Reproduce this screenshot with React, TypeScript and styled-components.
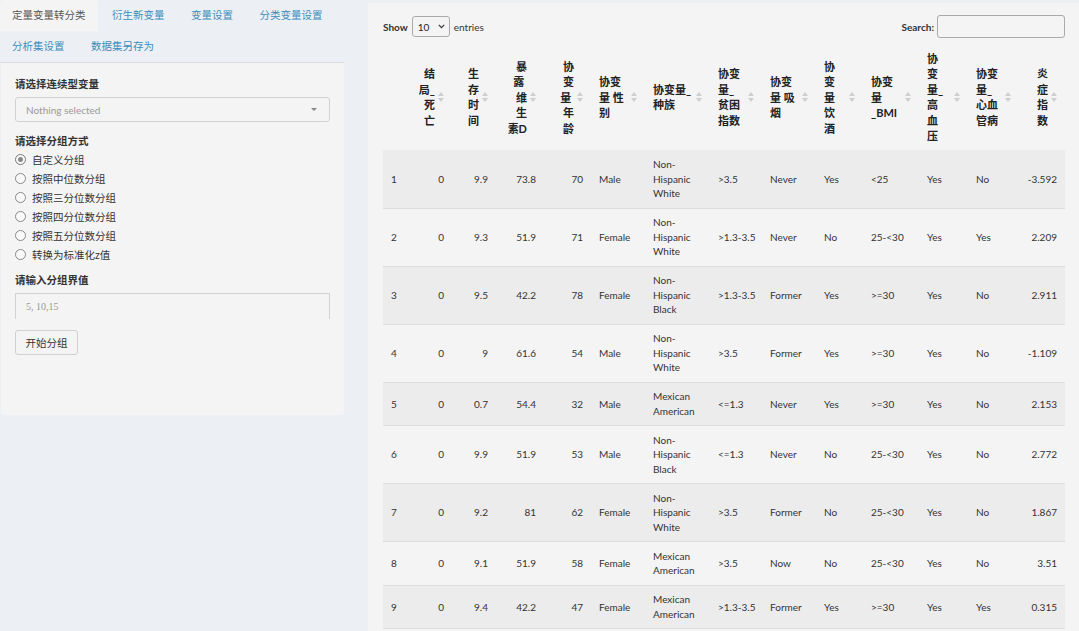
import React from 'react';
import styled, { createGlobalStyle } from 'styled-components';

const GlobalStyle = createGlobalStyle`
  html, body {
    margin: 0;
    padding: 0;
    background: #ecf0f5;
    font-family: Lato, "Noto Sans CJK SC", sans-serif;
    color: #333;
  }
`;

const Page = styled.div`
  display: flex;
  align-items: flex-start;
  height: 631px;
  overflow: hidden;
`;

const Sidebar = styled.div`
  width: 344px;
  flex: none;
`;

const TabList = styled.ul`
  display: flex;
  flex-wrap: wrap;
  list-style: none;
  margin: 0;
  padding: 0;
  border-bottom: 1px solid #dcdcdc;
`;

const Tab = styled.li<{ $active?: boolean }>`
  height: 31px;
  line-height: 31px;
  padding: 0 12px;
  margin-right: 2.5px;
  font-size: 10.5px;
  color: ${(p) => (p.$active ? '#555' : '#3c8dbc')};
  background: ${(p) => (p.$active ? '#f4f4f4' : 'transparent')};
  border-radius: 4px 4px 0 0;
`;

const Well = styled.div`
  margin-left: 1px;
  height: 352px;
  box-sizing: border-box;
  padding: 14px 14px;
  background: #f4f4f4;
  border-radius: 0 0 4px 4px;
`;

const FieldLabel = styled.div<{ $gap?: number }>`
  font-size: 10.5px;
  font-weight: 700;
  line-height: 15px;
  color: #333;
  margin-top: ${(p) => p.$gap ?? 0}px;
`;

const PickerBox = styled.div`
  margin-top: 5px;
  height: 25px;
  box-sizing: border-box;
  border: 1px solid #d2d2d2;
  border-radius: 3px;
  display: flex;
  align-items: center;
  justify-content: space-between;
  padding: 0 10px;
  font-size: 10px;
  color: #999;
`;

const Caret = styled.span`
  width: 0;
  height: 0;
  border-left: 3px solid transparent;
  border-right: 3px solid transparent;
  border-top: 3px solid #888;
  margin-right: 2px;
`;

const RadioGroup = styled.div`
  margin-top: 1px;
  display: flex;
  flex-direction: column;
`;

const RadioRow = styled.label`
  display: flex;
  align-items: center;
  height: 19px;
  font-size: 10.5px;
  color: #333;
`;

const RadioDot = styled.span<{ $checked?: boolean }>`
  width: 9px;
  height: 9px;
  border-radius: 50%;
  border: 1px solid ${(p) => (p.$checked ? '#777' : '#888')};
  background: #fafafa;
  margin-right: 6px;
  display: flex;
  align-items: center;
  justify-content: center;
  &::after {
    content: '';
    width: 5px;
    height: 5px;
    border-radius: 50%;
    background: ${(p) => (p.$checked ? '#888' : 'transparent')};
  }
`;

const TextBox = styled.div`
  margin-top: 5px;
  height: 26px;
  box-sizing: border-box;
  border: 1px solid #d2d2d2;
  border-bottom: none;
  padding: 0 10px;
  display: flex;
  align-items: center;
  font-family: "Liberation Serif", serif;
  font-size: 10px;
  color: #999;
`;

const PlainButton = styled.div`
  margin-top: 11px;
  width: 63px;
  height: 25px;
  box-sizing: border-box;
  border: 1px solid #d0d0d0;
  border-radius: 3px;
  display: flex;
  align-items: center;
  justify-content: center;
  font-size: 10.5px;
  color: #333;
`;

const MainPanel = styled.div`
  flex: 1;
  margin-left: 24px;
  margin-top: 3px;
  min-height: 640px;
  background: #f4f4f4;
  padding: 12px 14px 0 15px;
`;

const Controls = styled.div`
  display: flex;
  align-items: center;
  justify-content: space-between;
  height: 23px;
  font-size: 10px;
  font-weight: 700;
  color: #333;
`;

const ControlGroup = styled.div`
  display: flex;
  align-items: center;
  gap: 4px;
`;

const LengthSelect = styled.div`
  width: 38px;
  height: 21px;
  box-sizing: border-box;
  border: 1px solid #aaa;
  border-radius: 3px;
  display: flex;
  align-items: center;
  justify-content: space-between;
  padding: 0 4px 0 5px;
  font-weight: 400;
  color: #222;
`;

const PlainText = styled.span`
  font-weight: 400;
`;

const SearchInput = styled.div`
  width: 128px;
  height: 23px;
  box-sizing: border-box;
  border: 1px solid #aaa;
  border-radius: 3px;
  margin-left: -1px;
`;

const Table = styled.table`
  margin-top: 7px;
  width: 682px;
  table-layout: fixed;
  border-collapse: collapse;
  font-size: 10px;
`;

const HeadCell = styled.th<{ $right?: boolean }>`
  position: relative;
  height: 105px;
  box-sizing: border-box;
  padding: 0 17px 0 8px;
  vertical-align: middle;
  text-align: ${(p) => (p.$right ? 'right' : 'left')};
  font-size: 11px;
  font-weight: 700;
  line-height: 15.5px;
  color: #222;
  white-space: nowrap;
`;

const SortIcon = styled.svg`
  position: absolute;
  right: 8px;
  top: 50%;
  margin-top: -5px;
`;

const Row = styled.tr<{ $odd?: boolean }>`
  background: ${(p) => (p.$odd ? '#ececec' : 'transparent')};
  border-top: 1px solid #dddddd;
  &:first-child {
    border-top-color: transparent;
  }
  &:last-child {
    border-bottom: 1px solid #dddddd;
  }
`;

const Cell = styled.td<{ $right?: boolean }>`
  padding: 6.75px 8px;
  line-height: 14.5px;
  vertical-align: middle;
  text-align: ${(p) => (p.$right ? 'right' : 'left')};
  white-space: nowrap;
  color: #333;
`;

type Col = { w: number; lines: string[]; right?: boolean; sort?: boolean };

const columns: Col[] = [
  { w: 27, lines: [] },
  { w: 42, lines: ['结', '局_', '死', '亡'], right: true, sort: true },
  { w: 44, lines: ['生', '存', '时', '间'], right: true, sort: true },
  { w: 48, lines: ['暴', '露\u00a0', '维', '生', '素D'], right: true, sort: true },
  { w: 47, lines: ['协', '变', '量\u00a0', '年', '龄'], right: true, sort: true },
  { w: 54, lines: ['协变', '量 性', '别'], sort: true },
  { w: 65, lines: ['协变量_', '种族'], sort: true },
  { w: 52, lines: ['协变', '量_', '贫困', '指数'], sort: true },
  { w: 54, lines: ['协变', '量 吸', '烟'], sort: true },
  { w: 47, lines: ['协', '变', '量', '饮', '酒'], sort: true },
  { w: 56, lines: ['协变', '量', '_BMI'], sort: true },
  { w: 49, lines: ['协', '变', '量_', '高', '血', '压'], sort: true },
  { w: 51, lines: ['协变', '量_', '心血', '管病'], sort: true },
  { w: 46, lines: ['炎', '症', '指', '数'], right: true, sort: true },
];

const rows: string[][] = [
  ['1', '0', '9.9', '73.8', '70', 'Male', 'Non-|Hispanic|White', '>3.5', 'Never', 'Yes', '<25', 'Yes', 'No', '-3.592'],
  ['2', '0', '9.3', '51.9', '71', 'Female', 'Non-|Hispanic|White', '>1.3-3.5', 'Never', 'No', '25-<30', 'Yes', 'Yes', '2.209'],
  ['3', '0', '9.5', '42.2', '78', 'Female', 'Non-|Hispanic|Black', '>1.3-3.5', 'Former', 'Yes', '>=30', 'Yes', 'No', '2.911'],
  ['4', '0', '9', '61.6', '54', 'Male', 'Non-|Hispanic|White', '>3.5', 'Former', 'Yes', '>=30', 'Yes', 'No', '-1.109'],
  ['5', '0', '0.7', '54.4', '32', 'Male', 'Mexican|American', '<=1.3', 'Never', 'Yes', '>=30', 'Yes', 'No', '2.153'],
  ['6', '0', '9.9', '51.9', '53', 'Male', 'Non-|Hispanic|Black', '<=1.3', 'Never', 'No', '25-<30', 'Yes', 'No', '2.772'],
  ['7', '0', '9.2', '81', '62', 'Female', 'Non-|Hispanic|White', '>3.5', 'Former', 'No', '25-<30', 'Yes', 'No', '1.867'],
  ['8', '0', '9.1', '51.9', '58', 'Female', 'Mexican|American', '>3.5', 'Now', 'No', '25-<30', 'Yes', 'No', '3.51'],
  ['9', '0', '9.4', '42.2', '47', 'Female', 'Mexican|American', '>1.3-3.5', 'Former', 'Yes', '>=30', 'Yes', 'Yes', '0.315'],
];

const radios = ['自定义分组', '按照中位数分组', '按照三分位数分组', '按照四分位数分组', '按照五分位数分组', '转换为标准化z值'];

const Sort = () => (
  <SortIcon width="6" height="10" viewBox="0 0 6 10">
    <path d="M3 0 L6 4 L0 4 Z" fill="#cfcfcf" />
    <path d="M3 10 L6 6 L0 6 Z" fill="#cfcfcf" />
  </SortIcon>
);

const Lines = ({ text }: { text: string }) => (
  <>
    {text.split('|').map((t, i) => (
      <React.Fragment key={i}>
        {i > 0 && <br />}
        {t}
      </React.Fragment>
    ))}
  </>
);

export default function App() {
  return (
    <Page>
      <GlobalStyle />
      <Sidebar>
        <TabList>
          <Tab $active>定量变量转分类</Tab>
          <Tab>衍生新变量</Tab>
          <Tab>变量设置</Tab>
          <Tab>分类变量设置</Tab>
          <Tab>分析集设置</Tab>
          <Tab>数据集另存为</Tab>
        </TabList>
        <Well>
          <FieldLabel>请选择连续型变量</FieldLabel>
          <PickerBox>
            <span>Nothing selected</span>
            <Caret />
          </PickerBox>
          <FieldLabel $gap={12}>请选择分组方式</FieldLabel>
          <RadioGroup>
            {radios.map((r, i) => (
              <RadioRow key={r}>
                <RadioDot $checked={i === 0} />
                {r}
              </RadioRow>
            ))}
          </RadioGroup>
          <FieldLabel $gap={9}>请输入分组界值</FieldLabel>
          <TextBox>5, 10,15</TextBox>
          <PlainButton>开始分组</PlainButton>
        </Well>
      </Sidebar>

      <MainPanel>
        <Controls>
          <ControlGroup>
            Show
            <LengthSelect>
              <span>10</span>
              <svg width="7" height="5" viewBox="0 0 7 5">
                <path d="M0.8 0.8 L3.5 3.6 L6.2 0.8" fill="none" stroke="#333" strokeWidth="1.2" />
              </svg>
            </LengthSelect>
            <PlainText>entries</PlainText>
          </ControlGroup>
          <ControlGroup>
            Search:
            <SearchInput />
          </ControlGroup>
        </Controls>
        <Table>
          <colgroup>
            {columns.map((c, i) => (
              <col key={i} style={{ width: c.w }} />
            ))}
          </colgroup>
          <thead>
            <tr>
              {columns.map((c, i) => (
                <HeadCell key={i} $right={c.right}>
                  {c.lines.map((l, j) => (
                    <React.Fragment key={j}>
                      {j > 0 && <br />}
                      {l}
                    </React.Fragment>
                  ))}
                  {c.sort && <Sort />}
                </HeadCell>
              ))}
            </tr>
          </thead>
          <tbody>
            {rows.map((r, i) => (
              <Row key={i} $odd={i % 2 === 0}>
                {r.map((v, j) => (
                  <Cell key={j} $right={columns[j].right}>
                    <Lines text={v} />
                  </Cell>
                ))}
              </Row>
            ))}
          </tbody>
        </Table>
      </MainPanel>
    </Page>
  );
}
